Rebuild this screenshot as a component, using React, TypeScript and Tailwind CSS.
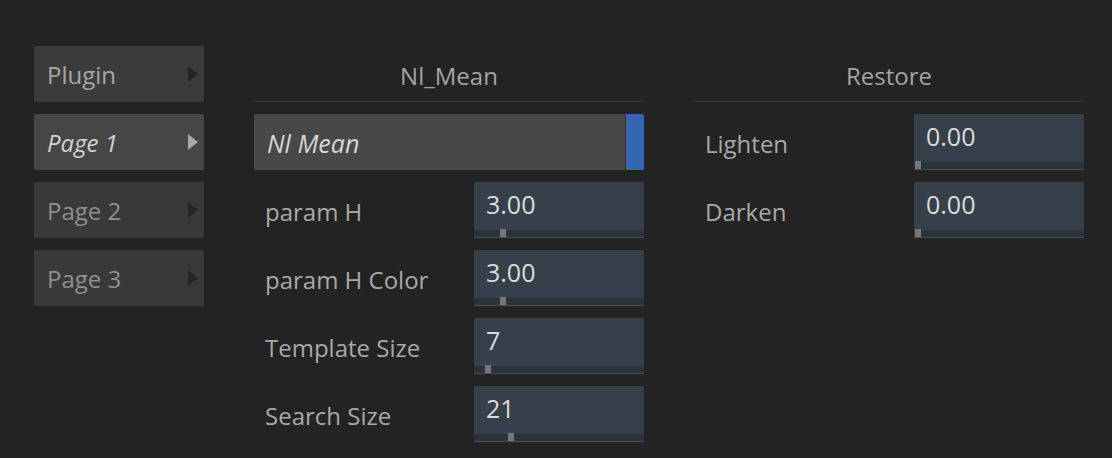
import React from "react";

const font = { fontFamily: '"Open Sans", "Noto Sans", sans-serif' };

type Nav = { label: string; active?: boolean; dim?: boolean };

const nav: Nav[] = [
  { label: "Plugin" },
  { label: "Page 1", active: true },
  { label: "Page 2", dim: true },
  { label: "Page 3", dim: true },
];

function NavButton({ item }: { item: Nav }) {
  return (
    <div
      className={`flex h-[56px] w-[170px] items-center justify-between rounded-[2px] pl-[13px] pr-[6px] ${
        item.active ? "bg-[#464646]" : item.dim ? "bg-[#393939]" : "bg-[#3b3b3b]"
      }`}
    >
      <span
        className={`pt-[2px] text-[24px] leading-[30px] ${
          item.active ? "italic text-[#d2d2d2]" : item.dim ? "text-[#8f8f8f]" : "text-[#a6a6a6]"
        }`}
      >
        {item.label}
      </span>
      <svg width="10" height="16" viewBox="0 0 10 16">
        <polygon points="0,0 10,8 0,16" fill={item.active ? "#a9a9a9" : "#242424"} />
      </svg>
    </div>
  );
}

function Field({ value, pos }: { value: string; pos: number }) {
  return (
    <div className="flex h-[56px] w-[170px] flex-col rounded-[2px] bg-[#36404a]">
      <div className="flex-1 pl-[12px] pt-[7px] text-[25px] leading-[30px] text-[#dcdcdc]">{value}</div>
      <div className="relative h-[8px] border-b border-[#46505a] bg-[#2a323a]">
        <div className="absolute top-[-1px] h-[8px] w-[6px] bg-[#767676]" style={{ left: pos }} />
      </div>
    </div>
  );
}

function Row({ label, value, pos }: { label: string; value: string; pos: number }) {
  return (
    <div className="flex h-[56px] items-center justify-between">
      <span className="pl-[11px] pt-[4px] text-[24px] leading-[30px] text-[#a9a9a9]">{label}</span>
      <Field value={value} pos={pos} />
    </div>
  );
}

function Header({ title }: { title: string }) {
  return (
    <div className="flex h-[56px] items-center justify-center border-b border-[#3a3a3a] pt-[4px] text-[24px] leading-[30px] text-[#a4a4a4]">
      {title}
    </div>
  );
}

export default function App() {
  return (
    <div className="flex h-[458px] w-[1112px] gap-[50px] bg-[#232323] pl-[34px] pt-[46px]" style={font}>
      <div className="flex flex-col gap-[12px]">
        {nav.map((n) => (
          <NavButton key={n.label} item={n} />
        ))}
      </div>

      <div className="flex w-[390px] flex-col gap-[12px]">
        <Header title="Nl_Mean" />
        <div className="flex h-[56px] rounded-[2px] bg-[#484848]">
          <div className="flex flex-1 items-center pl-[13px] pt-[2px] text-[25px] italic leading-[30px] text-[#d6d6d6]">Nl Mean</div>
          <div className="w-[19px] rounded-r-[2px] border-l border-[#2f2f2f] bg-[#3466b2]" />
        </div>
        <Row label="param H" value="3.00" pos={26} />
        <Row label="param H Color" value="3.00" pos={26} />
        <Row label="Template Size" value="7" pos={11} />
        <Row label="Search Size" value="21" pos={34} />
      </div>

      <div className="flex w-[390px] flex-col gap-[12px]">
        <Header title="Restore" />
        <Row label="Lighten" value="0.00" pos={1} />
        <Row label="Darken" value="0.00" pos={1} />
      </div>
    </div>
  );
}
